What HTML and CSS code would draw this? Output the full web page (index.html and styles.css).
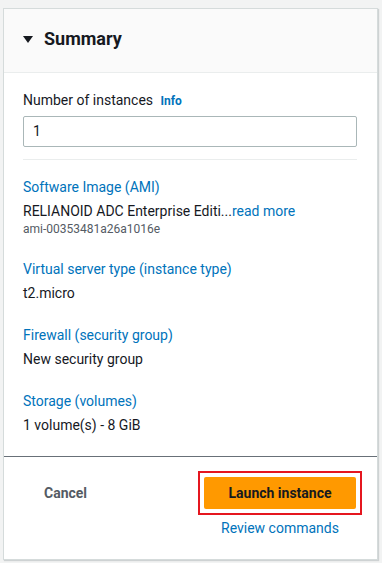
FILE: index.html
```html
<!DOCTYPE html>
<html>
<head>
<meta charset="utf-8">
<link rel="stylesheet" href="styles.css">
</head>
<body>
<div class="card">
  <div class="card-header">
    <svg class="caret" width="10" height="8" viewBox="0 0 10 8"><polygon points="0,0 10,0 5,7" fill="#16191f"/></svg>
    <h2 class="title">Summary</h2>
  </div>
  <div class="card-body">
    <div class="field">
      <div class="field-label">Number of instances <a class="info">Info</a></div>
      <div class="input">1</div>
    </div>
    <div class="divider"></div>
    <div class="item">
      <a class="item-label">Software Image (AMI)</a>
      <div class="item-value">RELIANOID ADC Enterprise Editi...<a class="link">read more</a></div>
      <div class="item-sub">ami-00353481a26a1016e</div>
    </div>
    <div class="item">
      <a class="item-label">Virtual server type (instance type)</a>
      <div class="item-value">t2.micro</div>
    </div>
    <div class="item">
      <a class="item-label">Firewall (security group)</a>
      <div class="item-value">New security group</div>
    </div>
    <div class="item">
      <a class="item-label">Storage (volumes)</a>
      <div class="item-value">1 volume(s) - 8 GiB</div>
    </div>
  </div>
  <div class="card-footer">
    <button class="btn-cancel">Cancel</button>
    <div class="primary-group">
      <div class="highlight"><button class="btn-primary">Launch instance</button></div>
      <a class="link review">Review commands</a>
    </div>
  </div>
</div>
</body>
</html>
```
FILE: styles.css
```css
* { box-sizing: border-box; }
html, body { margin: 0; padding: 0; }
body {
  background: #f2f3f3;
  font-family: Roboto, "Noto Sans", sans-serif;
  color: #16191f;
  font-size: 14px;
  width: 382px;
  height: 563px;
  overflow: hidden;
}
.card {
  margin: 8px 0 0 3px;
  width: 375px;
  height: 552px;
  background: #fff;
  border: 1px solid #d5dbdb;
  display: flex;
  flex-direction: column;
  box-shadow: 1px 1px 1px 0 rgba(0, 28, 36, 0.15);
}
.card-header {
  height: 64px;
  background: #fafafa;
  border-bottom: 1px solid #eaeded;
  display: flex;
  align-items: center;
  padding: 0 19px 3px;
  gap: 11px;
}
.caret { flex: none; margin-top: 1px; }
.title {
  margin: 0;
  font-size: 18px;
  font-weight: 700;
  line-height: 24px;
  color: #16191f;
}
.card-body {
  flex: 1;
  padding: 17px 20px 0 19px;
}
.field-label {
  font-size: 14px;
  line-height: 20px;
  color: #16191f;
}
.info {
  font-size: 12px;
  font-weight: 700;
  color: #0073bb;
  margin-left: 4px;
}
.input {
  margin-top: 5px;
  height: 31px;
  border: 1px solid #aab7b8;
  border-radius: 2px;
  padding: 0 9px;
  line-height: 29px;
  font-size: 14px;
}
.divider {
  margin-top: 12px;
  height: 1px;
  background: #eaeded;
}
.item { margin-top: 17px; }
.item + .item { margin-top: 22px; }
.item-label {
  display: block;
  color: #0073bb;
  line-height: 20px;
}
.item-value {
  margin-top: 4px;
  line-height: 20px;
}
.item-sub {
  font-size: 12px;
  color: #545b64;
  line-height: 16px;
}
.link { color: #0073bb; }
.card-footer {
  height: 103px;
  border-top: 1px solid #687078;
  display: flex;
  justify-content: space-between;
  padding: 14px 15px 0 20px;
}
.btn-cancel {
  background: none;
  border: none;
  font-family: inherit;
  font-size: 14px;
  font-weight: 700;
  color: #545b64;
  padding: 0 20px;
  height: 44px;
  align-self: flex-start;
}
.primary-group {
  display: flex;
  flex-direction: column;
  align-items: center;
}
.highlight {
  border: 2px solid #e5161f;
  padding: 4px;
}
.btn-primary {
  display: block;
  width: 152px;
  height: 32px;
  background: #ff9900;
  border: none;
  border-radius: 2px;
  font-family: inherit;
  font-size: 14px;
  font-weight: 700;
  color: #16191f;
}
.review {
  margin-top: 3px;
  line-height: 20px;
}
```
